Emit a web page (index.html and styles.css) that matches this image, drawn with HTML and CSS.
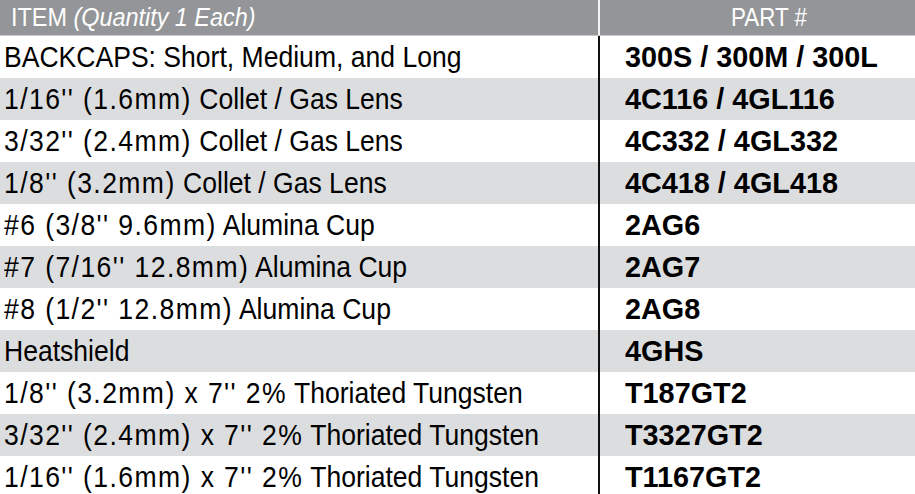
FILE: index.html
```html
<!DOCTYPE html>
<html>
<head>
<meta charset="utf-8">
<link rel="stylesheet" href="styles.css">
</head>
<body>
<div class="table">
  <div class="row head">
    <div class="c1"><span class="t"><span class="hb">ITEM</span> <span class="hi">(Quantity 1 Each)</span></span></div>
    <div class="c2"><span class="t">PART #</span></div>
  </div>
  <div class="row"><div class="c1"><span class="t">BACKCAPS: Short, Medium, and Long</span></div><div class="c2"><span class="t">300S / 300M / 300L</span></div></div>
  <div class="row alt"><div class="c1"><span class="t"><span class="n">1/16'' (1.6mm)</span> Collet / Gas Lens</span></div><div class="c2"><span class="t">4C116 / 4GL116</span></div></div>
  <div class="row"><div class="c1"><span class="t"><span class="n">3/32'' (2.4mm)</span> Collet / Gas Lens</span></div><div class="c2"><span class="t">4C332 / 4GL332</span></div></div>
  <div class="row alt"><div class="c1"><span class="t"><span class="n">1/8'' (3.2mm)</span> Collet / Gas Lens</span></div><div class="c2"><span class="t">4C418 / 4GL418</span></div></div>
  <div class="row"><div class="c1"><span class="t"><span class="n">#6 (3/8'' 9.6mm)</span> Alumina Cup</span></div><div class="c2"><span class="t">2AG6</span></div></div>
  <div class="row alt"><div class="c1"><span class="t"><span class="n">#7 (7/16'' 12.8mm)</span> Alumina Cup</span></div><div class="c2"><span class="t">2AG7</span></div></div>
  <div class="row"><div class="c1"><span class="t"><span class="n">#8 (1/2'' 12.8mm)</span> Alumina Cup</span></div><div class="c2"><span class="t">2AG8</span></div></div>
  <div class="row alt"><div class="c1"><span class="t">Heatshield</span></div><div class="c2"><span class="t">4GHS</span></div></div>
  <div class="row"><div class="c1"><span class="t"><span class="n">1/8'' (3.2mm) x 7'' 2%</span> Thoriated Tungsten</span></div><div class="c2"><span class="t">T187GT2</span></div></div>
  <div class="row alt"><div class="c1"><span class="t"><span class="n">3/32'' (2.4mm) x 7'' 2%</span> Thoriated Tungsten</span></div><div class="c2"><span class="t">T3327GT2</span></div></div>
  <div class="row"><div class="c1"><span class="t"><span class="n">1/16'' (1.6mm) x 7'' 2%</span> Thoriated Tungsten</span></div><div class="c2"><span class="t">T1167GT2</span></div></div>
</div>
</body>
</html>
```
FILE: styles.css
```css
html, body { margin: 0; padding: 0; background: #fff; }
body { width: 915px; height: 494px; overflow: hidden; }
.table {
  font-family: "Liberation Sans", Arial, sans-serif;
  color: #000;
}
.row {
  display: grid;
  grid-template-columns: 598px 2px 1fr;
  height: 42px;
  align-items: center;
  font-size: 30px;
  line-height: 42px;
  white-space: nowrap;
}
.row::before {
  content: "";
  grid-column: 2;
  grid-row: 1;
  align-self: stretch;
  background: #111;
}
.t {
  display: inline-block;
  transform-origin: 0 50%;
  transform: scaleX(0.885);
}
.n { letter-spacing: 1.6px; font-kerning: none; }
.row .c1 { grid-column: 1; grid-row: 1; padding-left: 4px; min-width: 0; }
.row .c2 { grid-column: 3; grid-row: 1; padding-left: 25px; font-weight: bold; min-width: 0; }
.row .c2 .t { transform: scaleX(0.96); }
.alt { background: #dcdddf; }
.head {
  height: 35px;
  line-height: 35px;
  background: #939598;
  color: #fff;
  font-size: 26px;
  border-bottom: 1px solid #c9cacc;
}
.head::before { background: #f4f4f4; }
.head .c1 { padding-left: 11px; }
.head .hi { font-style: italic; }
.head .c2 { font-weight: normal; padding-left: 131px; }
.head .c2 .t { transform: scaleX(0.86); }
.head .c1 .t { transform: scaleX(0.9); }
```
